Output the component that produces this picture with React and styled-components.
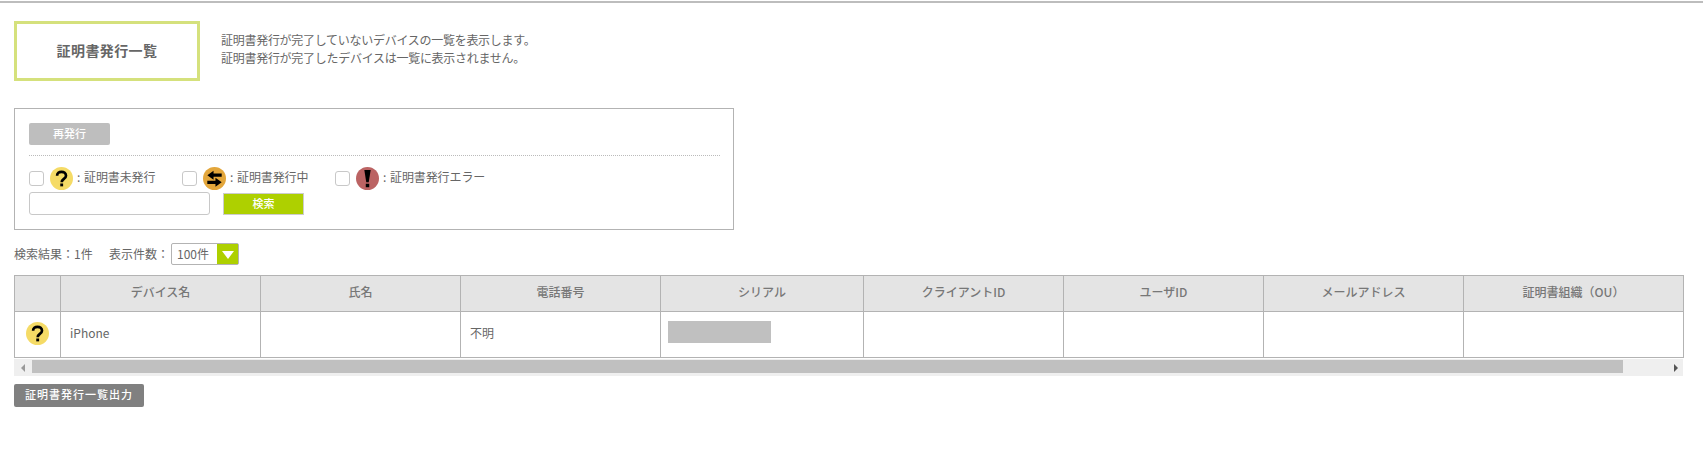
import React from "react";
import styled, { createGlobalStyle } from "styled-components";

const Global = createGlobalStyle`
  html, body { margin: 0; padding: 0; background: #fff; }
  body { font-family: "Noto Sans CJK JP", "Liberation Sans", sans-serif; color: #666; font-size: 12px; }
  * { box-sizing: border-box; }
`;

const Page = styled.div`
  width: 1703px; height: 471px; overflow: hidden;
  border-top: 2px solid #bdbdbd; margin-top: 1px;
  padding: 18px 20px 0 14px;
`;
const Header = styled.header`display: flex; align-items: center; gap: 21px;`;
const TitleBox = styled.h1`
  margin: 0; width: 186px; height: 60px; border: 3px solid #d5e17c;
  display: flex; align-items: center; justify-content: center; padding-bottom: 3px;
  font-size: 14px; font-weight: 700; letter-spacing: 0.4px; color: #666;
`;
const Desc = styled.p`margin: 0 0 4px; font-size: 12px; letter-spacing: -0.28px; line-height: 18px; color: #666;`;
const Panel = styled.section`
  width: 720px; height: 122px; margin-top: 27px; border: 1px solid #b3b3b3;
  padding: 14px 13px 0 14px;
`;
const ReissueButton = styled.div`
  width: 81px; height: 22px; border-radius: 2px; background: #bebebe; color: #fff; padding-bottom: 2px;
  font-size: 11px; font-weight: 500; display: flex; align-items: center; justify-content: center;
`;
const Dotted = styled.div`border-top: 1px dotted #bbb; margin-top: 10px;`;
const StatusRow = styled.div`display: flex; margin-top: 10px; height: 24px; align-items: center;`;
const StatusItem = styled.label`display: flex; align-items: center; width: 153px; white-space: nowrap;`;
const Check = styled.span`
  width: 15px; height: 15px; border: 1px solid #c8c8c8; border-radius: 3px; background: #fff; margin-right: 6px; flex: none;
`;
const StatusText = styled.span`margin-left: 4px; padding-bottom: 4px; letter-spacing: -0.1px;`;
const Colon = styled.span`display: inline-block; width: 7px;`;
const SearchRow = styled.div`display: flex; align-items: center; gap: 13px; margin-top: 2px;`;
const SearchInput = styled.input`
  width: 181px; height: 23px; border: 1px solid #c8c8c8; border-radius: 3px; background: #fff; padding: 0 4px;
`;
const SearchButton = styled.div`
  width: 81px; height: 22px; background: #aed000; border: 1px solid #ccc; color: #fff; padding-bottom: 2px;
  font-size: 11px; font-weight: 500; display: flex; align-items: center; justify-content: center;
`;
const ResultRow = styled.div`display: flex; align-items: center; height: 22px; margin-top: 13px;`;
const Count = styled.span`width: 95px; white-space: nowrap; padding-bottom: 2px;`;
const PerPage = styled.span`white-space: nowrap; margin-right: 2px; padding-bottom: 2px;`;
const Select = styled.div`
  width: 68px; height: 22px; border: 1px solid #b3b3b3; display: flex; align-items: stretch; border-radius: 2px;
`;
const SelectValue = styled.span`flex: 1; display: flex; align-items: center; padding: 0 0 2px 5px;`;
const SelectArrow = styled.span`
  width: 21px; background: #aed000; display: flex; align-items: center; justify-content: center;
  &::after { content: ""; border-left: 6px solid transparent; border-right: 6px solid transparent; border-top: 8px solid #fff; margin-top: 1px; }
`;
const TableWrap = styled.div`width: 1669px; margin-top: 10px;`;
const Table = styled.table`
  width: 1669px; table-layout: fixed; border-collapse: collapse; font-size: 12px;
`;
const Th = styled.th`
  height: 36px; background: #e4e4e4; border: 1px solid #b3b3b3; font-weight: 500; color: #777; text-align: center; padding: 0 0 4px;
  font-size: 12px;
`;
const Td = styled.td`
  height: 46px; border: 1px solid #b3b3b3; padding: 0 9px 4px; color: #666; text-align: ${p => p.$center ? "center" : "left"};
`;
const Masked = styled.div`width: 103px; height: 22px; background: #c0c0c0; margin: -1px 0 0 -2px;`;
const IconCell = styled.div`display: flex; justify-content: center; margin-top: 2px;`;
const Scrollbar = styled.div`
  height: 17px; background: #efefef; display: flex; align-items: center; position: relative; padding: 0 4px; margin-top: 1px;
`;
const Arrow = styled.span`
  width: 0; height: 0; border-top: 4px solid transparent; border-bottom: 4px solid transparent;
  ${p => p.$right ? "border-left: 4px solid #555; margin-left: auto; margin-right: 1px;" : "border-right: 4px solid #999; margin-left: 3px;"}
`;
const Thumb = styled.span`width: 1591px; height: 13px; background: #c0c0c0; margin: -2px 0 0 7px;`;
const ExportButton = styled.div`
  width: 130px; height: 23px; margin-top: 8px; background: #808080; border-radius: 2px; color: #fff; padding-bottom: 3px;
  font-size: 11px; font-weight: 500; letter-spacing: 1px; display: flex; align-items: center; justify-content: center; white-space: nowrap;
`;

function StatusIcon({ type, size = 23 }) {
  const fill = { q: "#f5db66", s: "#e3a63b", e: "#bb6363" }[type];
  return (
    <svg width={size} height={size} viewBox="0 0 24 24" style={{ flex: "none" }}>
      <circle cx="12" cy="12" r="12" fill={fill} />
      {type === "q" && (
        <g fill="none" stroke="#000">
          <path d="M7.4 9.2C7.4 6.4 9.4 5 12 5s4.7 1.6 4.7 4c0 3.4-4.5 3.4-4.5 6.8" strokeWidth="2.8" />
          <path d="M12.2 17.2v3" strokeWidth="3" />
        </g>
      )}
      {type === "s" && (
        <g fill="#000">
          <path d="M4.5 8.5 11 3.8v3h8.5v3.4H11v3z" />
          <path d="M19.5 16 13 11.3v3H4.5v3.4H13v3z" />
        </g>
      )}
      {type === "e" && (
        <g fill="#000">
          <path d="M8.7 3h6.6l-2 13h-2.6z" />
          <rect x="10.2" y="17.5" width="3.6" height="3.6" />
        </g>
      )}
    </svg>
  );
}

const cols = [46, 200, 200, 200, 203, 200, 200, 200, 220];
const heads = ["", "デバイス名", "氏名", "電話番号", "シリアル", "クライアントID", "ユーザID", "メールアドレス", "証明書組織（OU）"];
const statuses = [["q", "証明書未発行"], ["s", "証明書発行中"], ["e", "証明書発行エラー"]];

export default function App() {
  return (
    <Page>
      <Global />
      <Header>
        <TitleBox>証明書発行一覧</TitleBox>
        <div>
          <Desc>
            証明書発行が完了していないデバイスの一覧を表示します。<br />
            証明書発行が完了したデバイスは一覧に表示されません。
          </Desc>
        </div>
      </Header>
      <Panel>
        <ReissueButton>再発行</ReissueButton>
        <Dotted />
        <StatusRow>
          {statuses.map(([t, l]) => (
            <StatusItem key={t}>
              <Check />
              <StatusIcon type={t} />
              <StatusText><Colon>:</Colon>{l}</StatusText>
            </StatusItem>
          ))}
        </StatusRow>
        <SearchRow>
          <SearchInput />
          <SearchButton>検索</SearchButton>
        </SearchRow>
      </Panel>
      <ResultRow>
        <Count>検索結果：1件</Count>
        <PerPage>表示件数：</PerPage>
        <Select>
          <SelectValue>100件</SelectValue>
          <SelectArrow />
        </Select>
      </ResultRow>
      <TableWrap>
        <Table>
          <colgroup>{cols.map((w, i) => <col key={i} style={{ width: w }} />)}</colgroup>
          <thead>
            <tr>{heads.map((h, i) => <Th key={i}>{h}</Th>)}</tr>
          </thead>
          <tbody>
            <tr>
              <Td $center><IconCell><StatusIcon type="q" /></IconCell></Td>
              <Td>iPhone</Td>
              <Td />
              <Td>不明</Td>
              <Td><Masked /></Td>
              <Td /><Td /><Td /><Td />
            </tr>
          </tbody>
        </Table>
        <Scrollbar>
          <Arrow />
          <Thumb />
          <Arrow $right />
        </Scrollbar>
      </TableWrap>
      <ExportButton>証明書発行一覧出力</ExportButton>
    </Page>
  );
}
